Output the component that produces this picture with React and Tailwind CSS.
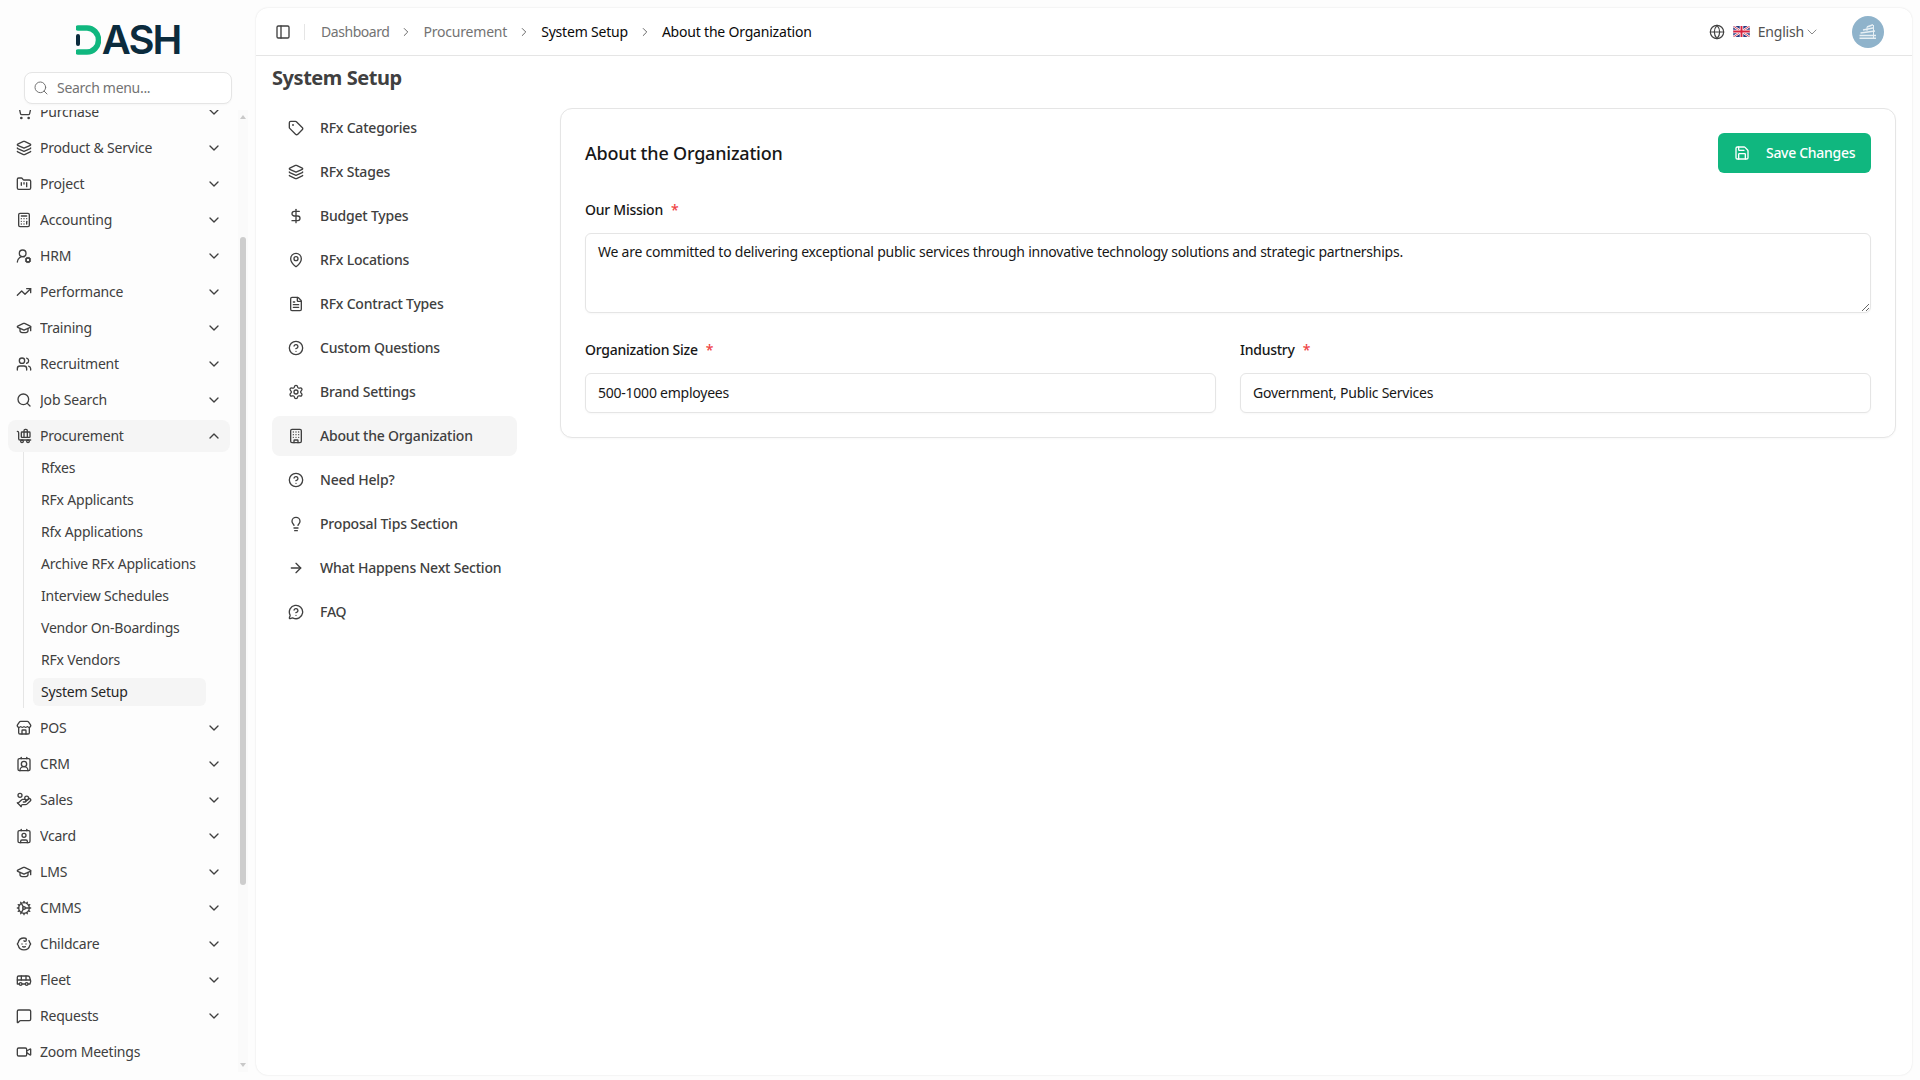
import React from "react";
import {
  ShoppingCart, Layers, FolderKanban, Calculator, UserRoundCog, TrendingUp, GraduationCap, Users, Search, ChevronDown, ChevronUp, ChevronRight,
  BaggageClaim, Store, Contact, ContactRound, HandCoins, Cog, Baby, Bus, MessageSquare, Video, PanelLeft, Globe, Save, Tag, DollarSign, MapPin,
  FileText, CircleHelp, Settings, Building, Lightbulb, ArrowRight, MessageCircleQuestion,
} from "lucide-react";

const font = "font-['Noto_Sans','Liberation_Sans',sans-serif]";

const before = [
  ["Purchase", ShoppingCart], ["Product & Service", Layers], ["Project", FolderKanban], ["Accounting", Calculator], ["HRM", UserRoundCog],
  ["Performance", TrendingUp], ["Training", GraduationCap], ["Recruitment", Users], ["Job Search", Search],
];
const after = [
  ["POS", Store], ["CRM", ContactRound], ["Sales", HandCoins], ["Vcard", Contact], ["LMS", GraduationCap], ["CMMS", Cog], ["Childcare", Baby],
  ["Fleet", Bus], ["Requests", MessageSquare],
];
const subs = ["Rfxes", "RFx Applicants", "Rfx Applications", "Archive RFx Applications", "Interview Schedules", "Vendor On-Boardings", "RFx Vendors"];
const setup = [
  ["RFx Categories", Tag], ["RFx Stages", Layers], ["Budget Types", DollarSign], ["RFx Locations", MapPin], ["RFx Contract Types", FileText],
  ["Custom Questions", CircleHelp], ["Brand Settings", Settings], ["About the Organization", Building, true], ["Need Help?", CircleHelp],
  ["Proposal Tips Section", Lightbulb], ["What Happens Next Section", ArrowRight], ["FAQ", MessageCircleQuestion],
];

function Row({ label, Icon, open, noChevron }) {
  return (
    <div className={`flex h-8 w-[222px] shrink-0 items-center gap-2 rounded-lg px-2 ml-2 text-[#404040] ${open ? "bg-[#f5f5f5]" : ""}`}>
      <Icon size={16} className="shrink-0" />
      <span className="flex-1 truncate text-sm tracking-[-0.2px]">{label}</span>
      {!noChevron && (open ? <ChevronUp size={16} /> : <ChevronDown size={16} />)}
    </div>
  );
}

function Logo() {
  return (
    <div className="flex h-[30px] items-center">
      <svg width="25" height="30" viewBox="0 0 25 30" className="shrink-0">
        <path d="M2 3 H11 A11.5 12 0 0 1 11 27 H2" fill="none" stroke="#10b77f" strokeWidth="5.5" strokeLinecap="round" />
        <path d="M2 11 V19" fill="none" stroke="#0b2b3d" strokeWidth="4" strokeLinecap="round" />
      </svg>
      <span className="ml-[1px] font-['Inter',sans-serif] text-[40px] font-semibold leading-[30px] tracking-[-2px] text-[#0b2b3d]">ASH</span>
    </div>
  );
}

function Flag() {
  return (
    <svg width="17" height="11" viewBox="0 0 60 40" className="shrink-0 rounded-[1px]">
      <rect width="60" height="40" fill="#2b3a80" />
      <path d="M0 0 L60 40 M60 0 L0 40" stroke="#fff" strokeWidth="8" />
      <path d="M0 0 L60 40 M60 0 L0 40" stroke="#d8233f" strokeWidth="3" />
      <path d="M30 0 V40 M0 20 H60" stroke="#fff" strokeWidth="13" />
      <path d="M30 0 V40 M0 20 H60" stroke="#d8233f" strokeWidth="7" />
    </svg>
  );
}

function Avatar() {
  return (
    <div className="flex h-8 w-8 items-center justify-center rounded-full bg-[#8fb3cb]">
      <svg width="20" height="20" viewBox="0 0 20 20" fill="none" stroke="#e6eff4" strokeWidth="1.5">
        <path d="M9 5 L15 2.8 M5 8 L16 5.8 M2.5 11 L17 9 M1.5 13.5 H18 M1.5 16.2 H18" />
        <path d="M15.5 3 V17 M9 5 V9" strokeWidth="1" />
      </svg>
    </div>
  );
}

function Label({ children }) {
  return (
    <label className="flex h-5 items-center text-sm font-medium tracking-[-0.25px] text-[#171717]">
      {children}
      <span className="ml-2 text-[#ef4444]">*</span>
    </label>
  );
}

const fieldClass = "w-full rounded-md border border-[#e5e5e5] bg-white px-3 text-sm tracking-[-0.24px] text-[#171717] shadow-[0_1px_2px_rgba(0,0,0,0.03)] outline-none";

export default function App() {
  return (
    <div className={`flex h-screen w-full overflow-hidden bg-[#fdfdfd] ${font}`}>
      <aside className="relative flex h-full w-64 shrink-0 flex-col">
        <div className="flex justify-center pt-[25px]"><Logo /></div>
        <div className="mx-6 mt-[17px] flex h-8 items-center gap-2 rounded-lg border border-[#e5e5e5] bg-white px-2 shadow-[0_1px_2px_rgba(0,0,0,0.03)]">
          <Search size={16} strokeWidth={1.5} className="text-[#737373]" />
          <span className="text-sm tracking-[-0.3px] text-[#737373]">Search menu...</span>
        </div>
        <div className="relative mt-[6px] h-[962px] overflow-hidden">
          <div className="-mt-[14px] flex flex-col gap-1">
            {before.map(([l, I]) => <Row key={l} label={l} Icon={I} />)}
            <Row label="Procurement" Icon={BaggageClaim} open />
            <div className="-mt-1 ml-[23px] mr-[50px] flex flex-col gap-1 border-l border-[#e5e5e5] py-[2px] pl-[9px] pr-0">
              {subs.map((s) => (
                <div key={s} className="flex h-7 items-center px-2 text-sm tracking-[-0.2px] text-[#404040]">{s}</div>
              ))}
              <div className="flex h-7 items-center rounded-md bg-[#f5f5f5] px-2 text-sm tracking-[-0.2px] text-[#262626]">System Setup</div>
            </div>
            {after.map(([l, I]) => <Row key={l} label={l} Icon={I} />)}
            <Row label="Zoom Meetings" Icon={Video} noChevron />
          </div>
          <div className="absolute right-2 top-0 bottom-0 w-[10px] bg-[#fafafa]">
            <div className="absolute left-[2px] top-[5px] h-0 w-0 border-x-[3px] border-b-[4px] border-x-transparent border-b-[#c8c8c8]" />
            <div className="absolute left-[2px] top-[127px] h-[648px] w-[6px] rounded-sm bg-[#cdcdcd]" />
            <div className="absolute bottom-[5px] left-[2px] h-0 w-0 border-x-[3px] border-t-[4px] border-x-transparent border-t-[#c8c8c8]" />
          </div>
        </div>
      </aside>

      <main className="mb-[5px] mr-2 mt-2 flex min-w-0 flex-1 flex-col rounded-xl bg-white shadow-[0_0_2px_rgba(0,0,0,0.12)]">
        <header className="flex h-12 shrink-0 items-center border-b border-[#e5e5e5] pl-[19px] pr-[28px]">
          <PanelLeft size={16} className="text-[#404040]" />
          <div className="ml-[13px] mr-4 h-4 w-px bg-[#e5e5e5]" />
          <nav className="flex items-center text-sm tracking-[-0.2px]">
            <span className="tracking-[-0.45px] text-[#737373]">Dashboard</span>
            <ChevronRight size={14} strokeWidth={1.5} className="mx-[10px] text-[#525252]" />
            <span className="text-[#737373]">Procurement</span>
            <ChevronRight size={14} strokeWidth={1.5} className="mx-[10px] text-[#525252]" />
            <span className="text-[#0a0a0a]">System Setup</span>
            <ChevronRight size={14} strokeWidth={1.5} className="mx-[10px] text-[#525252]" />
            <span className="text-[#0a0a0a]">About the Organization</span>
          </nav>
          <div className="ml-auto flex items-center">
            <Globe size={16} strokeWidth={1.75} className="text-[#404040]" />
            <span className="ml-2"><Flag /></span>
            <span className="ml-2 text-sm tracking-[-0.2px] text-[#525252]">English</span>
            <ChevronDown size={16} strokeWidth={1.25} className="text-[#737373]" />
            <div className="ml-8"><Avatar /></div>
          </div>
        </header>

        <div className="flex-1 px-4 pt-2">
          <h1 className="mb-4 text-xl font-bold leading-7 tracking-[-0.45px] text-[#404040]">System Setup</h1>
          <div className="flex items-start gap-[43px]">
            <nav className="flex w-[245px] shrink-0 flex-col gap-1">
              {setup.map(([l, I, active]) => (
                <div key={l} className={`flex h-10 items-center gap-4 rounded-lg px-4 text-sm font-medium tracking-[-0.2px] text-[#404040] ${active ? "bg-[#f5f5f5]" : ""}`}>
                  <I size={16} className="shrink-0" />
                  <span className="whitespace-nowrap">{l}</span>
                </div>
              ))}
            </nav>
            <section className="min-w-0 flex-1 rounded-xl border border-[#e5e5e5] bg-white p-6 shadow-[0_1px_2px_rgba(0,0,0,0.03)]">
              <div className="flex h-10 items-center justify-between">
                <h2 className="text-lg font-medium tracking-[-0.2px] text-[#171717]">About the Organization</h2>
                <button className="flex h-10 w-[153px] items-center gap-4 rounded-md bg-[#10b77f] pl-4 text-sm font-medium tracking-[-0.3px] text-white">
                  <Save size={16} />
                  <span>Save Changes</span>
                </button>
              </div>
              <div className="mt-[27px]"><Label>Our Mission</Label></div>
              <textarea
                readOnly
                value="We are committed to delivering exceptional public services through innovative technology solutions and strategic partnerships."
                className={`${fieldClass} mt-[13px] block h-20 py-2 leading-5`}
              />
              <div className="mt-[27px] grid grid-cols-2 gap-6">
                <div>
                  <Label>Organization Size</Label>
                  <input readOnly value="500-1000 employees" className={`${fieldClass} mt-[13px] block h-10 pb-[2px]`} />
                </div>
                <div>
                  <Label>Industry</Label>
                  <input readOnly value="Government, Public Services" className={`${fieldClass} mt-[13px] block h-10 pb-[2px]`} />
                </div>
              </div>
            </section>
          </div>
        </div>
      </main>
    </div>
  );
}
